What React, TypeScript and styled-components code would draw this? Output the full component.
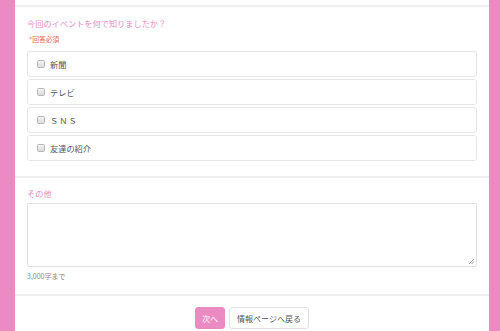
import React from "react";
import styled, { createGlobalStyle } from "styled-components";

const GlobalStyle = createGlobalStyle`
  html, body {
    margin: 0;
    padding: 0;
    background: #ec8ac3;
    font-family: "Noto Sans CJK JP", "Noto Sans", sans-serif;
  }
`;

const Page = styled.div`
  margin: 0 11px 0 15px;
  background: #ffffff;
  min-height: 331px;
`;

const TopEdge = styled.div`
  height: 5px;
  border-bottom: 2px solid #efefef;
`;

const Section = styled.div<{ $pt: number; $pb: number; $line?: boolean }>`
  padding: ${(p) => p.$pt}px 12px ${(p) => p.$pb}px 12px;
  border-bottom: ${(p) => (p.$line ? "2px solid #efefef" : "none")};
`;

const Question = styled.div`
  font-size: 8.2px;
  line-height: 12px;
  color: #ec8ac3;
`;

const Required = styled.div`
  font-size: 6.8px;
  line-height: 10px;
  color: #f0644a;
  margin: 5px 0 0 2px;
`;

const Options = styled.div`
  display: flex;
  flex-direction: column;
  gap: 2px;
  margin-top: 7px;
`;

const Option = styled.label`
  display: flex;
  align-items: center;
  height: 24px;
  border: 1px solid #e6e6e6;
  border-radius: 3px;
  padding-left: 9px;
  font-size: 8.2px;
  color: #555555;
`;

const Box = styled.span`
  width: 6px;
  height: 6px;
  border: 1px solid #b5b5b5;
  border-radius: 1.5px;
  background: linear-gradient(#f2f2f2, #dcdcdc);
  margin-right: 5px;
`;

const Spaced = styled.span`
  letter-spacing: 1px;
`;

const Textarea = styled.div`
  position: relative;
  height: 62px;
  border: 1px solid #e2e2e2;
  border-radius: 2px;
  margin-top: 4px;
`;

const Grip = styled.svg`
  position: absolute;
  right: 1px;
  bottom: 1px;
`;

const Note = styled.div`
  font-size: 7px;
  line-height: 10px;
  color: #8a8a8a;
  margin-top: 4px;
`;

const Buttons = styled.div`
  display: flex;
  justify-content: center;
  gap: 4px;
  padding-top: 11px;
`;

const Button = styled.div<{ $primary?: boolean }>`
  height: 20px;
  display: flex;
  align-items: center;
  padding: 0 ${(p) => (p.$primary ? 6 : 7)}px;
  border-radius: 3px;
  font-size: 8px;
  color: ${(p) => (p.$primary ? "#ffffff" : "#555555")};
  background: ${(p) => (p.$primary ? "#ec8ac3" : "#ffffff")};
  border: 1px solid ${(p) => (p.$primary ? "#ec8ac3" : "#e2e2e2")};
`;

const options = ["新聞", "テレビ", "ＳＮＳ", "友達の紹介"];

export default function App() {
  return (
    <>
      <GlobalStyle />
      <Page>
        <TopEdge />
        <Section $pt={10} $pb={15} $line>
          <Question>今回のイベントを何で知りましたか？</Question>
          <Required>*回答必須</Required>
          <Options>
            {options.map((o) => (
              <Option key={o}>
                <Box />
                {o === "ＳＮＳ" ? <Spaced>{o}</Spaced> : o}
              </Option>
            ))}
          </Options>
        </Section>
        <Section $pt={9} $pb={13} $line>
          <Question>その他</Question>
          <Textarea>
            <Grip width="7" height="7" viewBox="0 0 7 7">
              <path d="M6 1 L1 6 M6 3.5 L3.5 6" stroke="#999" strokeWidth="0.8" />
            </Grip>
          </Textarea>
          <Note>3,000字まで</Note>
        </Section>
        <Buttons>
          <Button $primary>次へ</Button>
          <Button>情報ページへ戻る</Button>
        </Buttons>
      </Page>
    </>
  );
}
